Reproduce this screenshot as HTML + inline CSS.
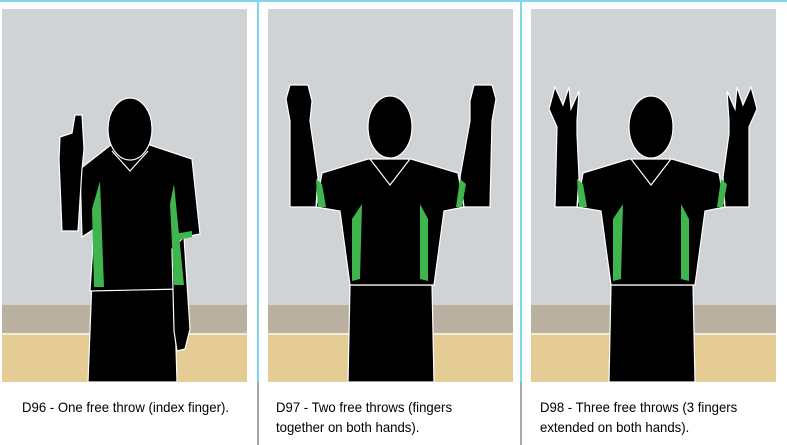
<!DOCTYPE html>
<html><head><style>
body{margin:0;width:787px;height:445px;background:#fff;position:relative;overflow:hidden;font-family:"Liberation Sans",sans-serif}
.p{position:absolute;top:9px;width:245px;height:373px}
.vl{position:absolute;top:0;width:2px;height:445px;background:linear-gradient(#7fd6ea 0,#7fd6ea 382px,#a8a8a8 382px)}
.cap{position:absolute;top:397px;font-size:14px;line-height:20px;color:#000;transform:scaleX(0.94);transform-origin:0 0;white-space:nowrap}
</style></head><body>
<div style="position:absolute;left:0;top:0;width:787px;height:2px;background:#7fd6ea"></div>
<div class="vl" style="left:257px"></div>
<div class="vl" style="left:520px"></div>

<svg class="p" style="left:2px" viewBox="0 0 245 373">
<rect width="245" height="296" fill="#d0d3d6"/><rect y="296" width="245" height="28" fill="#b9b09f"/><rect y="324" width="245" height="2" fill="#f2ead8"/><rect y="326" width="245" height="47" fill="#e5cc95"/>
<g stroke="#fff" stroke-width="1.2">
<path d="M86 373 L90 270 L172 270 L175 373 Z" fill="#000"/>
<path d="M110 135 L145 135 L190 150 L198 225 L182 228 L180 280 L88 282 L92 220 L80 228 L78 160 Z" fill="#000"/>
<path d="M182 228 L188 320 L183 340 L175 342 L172 322 L170 240 Z" fill="#000"/>
<path d="M80 160 L76 222 L60 222 L57 150 L58 128 L70 124 L73 106 L80 106 L82 140 Z" fill="#000"/>
<ellipse cx="128" cy="120" rx="22" ry="31" fill="#000"/>
</g>
<path d="M90 200 L98 172 L102 278 L92 278 Z M168 195 L172 175 L182 276 L172 276 Z" fill="#3fb54e"/>
<path d="M172 225 L190 222 L190 228 L172 232 Z" fill="#3fb54e"/>
<path d="M110 142 L128 162 L146 142" fill="none" stroke="#fff" stroke-width="1.2"/>
</svg>

<svg class="p" style="left:268px" viewBox="0 0 245 373">
<rect width="245" height="296" fill="#d0d3d6"/><rect y="296" width="245" height="28" fill="#b9b09f"/><rect y="324" width="245" height="2" fill="#f2ead8"/><rect y="326" width="245" height="47" fill="#e5cc95"/>
<g stroke="#fff" stroke-width="1.2">
<path d="M80 373 L82 276 L164 276 L166 373 Z" fill="#000"/>
<path d="M100 150 L143 150 L190 164 L196 198 L176 202 L166 276 L82 276 L72 202 L48 198 L54 164 Z" fill="#000"/>
<path d="M48 198 L22 198 L22 112 L18 90 L22 76 L40 76 L44 92 L42 112 L50 168 Z" fill="#000"/>
<path d="M196 198 L222 198 L224 112 L228 90 L224 76 L206 76 L202 92 L202 112 L192 168 Z" fill="#000"/>
<ellipse cx="122" cy="118" rx="22" ry="31" fill="#000"/>
</g>
<path d="M48 170 L54 175 L58 198 L50 198 Z M192 170 L198 175 L194 198 L188 198 Z M84 210 L94 195 L92 270 L84 272 Z M152 195 L160 210 L160 272 L152 270 Z" fill="#3fb54e"/>
<path d="M102 150 L122 176 L142 150" fill="none" stroke="#fff" stroke-width="1.2"/>
</svg>

<svg class="p" style="left:531px" viewBox="0 0 245 373">
<rect width="245" height="296" fill="#d0d3d6"/><rect y="296" width="245" height="28" fill="#b9b09f"/><rect y="324" width="245" height="2" fill="#f2ead8"/><rect y="326" width="245" height="47" fill="#e5cc95"/>
<g stroke="#fff" stroke-width="1.2">
<path d="M78 373 L80 276 L162 276 L164 373 Z" fill="#000"/>
<path d="M98 150 L141 150 L188 164 L194 198 L174 202 L164 276 L80 276 L70 202 L46 198 L52 164 Z" fill="#000"/>
<path d="M46 198 L24 198 L26 118 L18 100 L24 78 L32 96 L38 78 L40 100 L48 82 L46 112 L46 125 L48 168 Z" fill="#000"/>
<path d="M194 198 L218 198 L218 118 L226 100 L220 78 L212 96 L206 78 L204 100 L196 82 L198 112 L198 125 L192 168 Z" fill="#000"/>
<ellipse cx="120" cy="118" rx="22" ry="31" fill="#000"/>
</g>
<path d="M46 170 L52 175 L56 198 L48 198 Z M190 170 L196 175 L192 198 L186 198 Z M82 210 L92 195 L90 270 L82 272 Z M150 195 L158 210 L158 272 L150 270 Z" fill="#3fb54e"/>
<path d="M100 150 L120 176 L140 150" fill="none" stroke="#fff" stroke-width="1.2"/>
</svg>

<div class="cap" style="left:22px">D96 - One free throw (index finger).</div>
<div class="cap" style="left:276px">D97 - Two free throws (fingers<br>together on both hands).</div>
<div class="cap" style="left:540px">D98 - Three free throws (3 fingers<br>extended on both hands).</div>
</body></html>
